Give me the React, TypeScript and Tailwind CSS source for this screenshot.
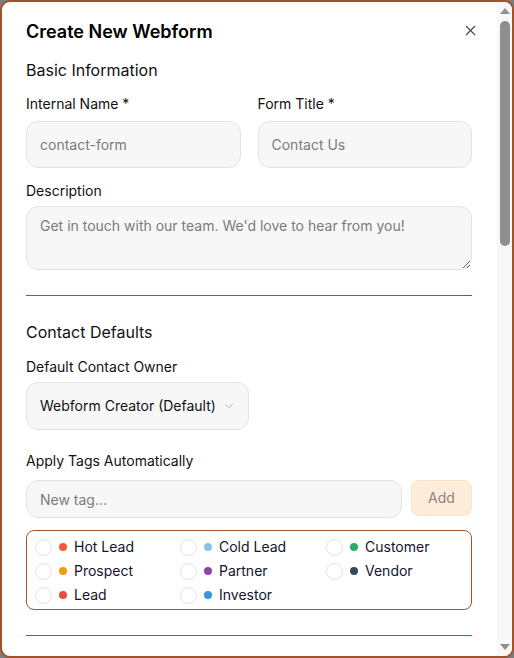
import { useState } from "react";
import { X, ChevronDown } from "lucide-react";

type Tag = { name: string; color: string };

const tags: Tag[] = [
  { name: "Hot Lead", color: "#ff5733" },
  { name: "Cold Lead", color: "#85c1e9" },
  { name: "Customer", color: "#27ae60" },
  { name: "Prospect", color: "#f39c12" },
  { name: "Partner", color: "#8e44ad" },
  { name: "Vendor", color: "#34495e" },
  { name: "Lead", color: "#e74c3c" },
  { name: "Investor", color: "#3498db" },
];

const inputCls =
  "w-full rounded-xl border border-[#e3e3e3] bg-[#f7f7f7] px-[13px] text-sm text-[#222] placeholder:text-[#7b7b7b] outline-none";

function Label({ children }: { children: React.ReactNode }) {
  return <label className="block text-sm leading-5 text-[#111]">{children}</label>;
}

function Section({ title }: { title: string }) {
  return <h3 className="text-base leading-6 text-[#111]">{title}</h3>;
}

// classic scrollbar column beside the dialog body
function ScrollTrack() {
  return (
    <div className="flex w-[15px] shrink-0 flex-col items-center bg-[#f8f8f8]">
      <svg width="10" height="6" viewBox="0 0 10 6" className="mt-[6px]">
        <path d="M5 0 L10 6 L0 6 Z" fill="#8f8f8f" />
      </svg>
      <div className="mt-[7px] h-[225px] w-[10px] rounded-full bg-[#8f8f8f]" />
      <div className="flex-1" />
      <svg width="10" height="6" viewBox="0 0 10 6" className="mb-[6px]">
        <path d="M0 0 L10 0 L5 6 Z" fill="#8f8f8f" />
      </svg>
    </div>
  );
}

export default function App() {
  const [selected, setSelected] = useState<string[]>([]);

  const toggle = (name: string) =>
    setSelected((s) => (s.includes(name) ? s.filter((n) => n !== name) : [...s, name]));

  return (
    <div className="h-[658px] w-[514px] bg-[#7d7d7d] font-['Inter',sans-serif]">
      <div className="flex h-full w-full overflow-hidden rounded-[10px] border-2 border-[#a0522d] bg-white">
        <div className="min-w-0 flex-1 overflow-hidden pl-6 pr-[25px] pt-4">
          <div className="flex items-center justify-between">
            <h2 className="text-lg font-semibold leading-7 text-black">Create New Webform</h2>
            <button type="button" className="-mr-[7px] mt-[-4px] text-[#444]">
              <X className="h-[17px] w-[17px]" strokeWidth={1.5} />
            </button>
          </div>

          {/* basic info */}
          <div className="mt-3">
            <Section title="Basic Information" />
            <div className="mt-3 grid grid-cols-2 gap-[17px]">
              <div>
                <Label>Internal Name *</Label>
                <input className={`${inputCls} mt-[7px] h-[47px]`} placeholder="contact-form" />
              </div>
              <div>
                <Label>Form Title *</Label>
                <input className={`${inputCls} mt-[7px] h-[47px]`} placeholder="Contact Us" />
              </div>
            </div>
            <div className="mt-[13px]">
              <Label>Description</Label>
              <textarea
                className={`${inputCls} mt-[5px] block h-[64px] py-[9px]`}
                placeholder="Get in touch with our team. We'd love to hear from you!"
              />
            </div>
          </div>

          <hr className="mt-[25px] border-t border-[#a0522d]" />

          {/* contact defaults */}
          <div className="mt-6">
            <Section title="Contact Defaults" />
            <div className="mt-[13px]">
              <Label>Default Contact Owner</Label>
              <button
                type="button"
                className="mt-[5px] flex h-[48px] w-[223px] items-center justify-between rounded-xl border border-[#e3e3e3] bg-[#f7f7f7] pl-[13px] pr-[12px] text-sm text-[#111]"
              >
                <span>Webform Creator (Default)</span>
                <ChevronDown className="h-[14px] w-[14px] text-[#a8a8a8]" strokeWidth={1.5} />
              </button>
            </div>

            <div className="mt-[21px]">
              <Label>Apply Tags Automatically</Label>
              <div className="mt-[9px] flex gap-[9px]">
                <input className={`${inputCls} h-[38px] flex-1`} placeholder="New tag..." />
                <button
                  type="button"
                  className="h-[36px] w-[61px] rounded-lg border border-[#fbe3c8] bg-[#fdecd9] text-sm text-[#8c8480]"
                >
                  Add
                </button>
              </div>

              <div className="mt-[12px] grid grid-cols-[145px_146px_145px] rounded-lg border border-[#a0522d] pb-[2px] pl-2 pt-1">
                {tags.map((t) => (
                  <button
                    key={t.name}
                    type="button"
                    onClick={() => toggle(t.name)}
                    className="flex h-6 items-center text-left text-sm text-[#14142b]"
                  >
                    <span
                      className={`h-[17px] w-[17px] shrink-0 rounded-full border ${
                        selected.includes(t.name) ? "border-[#a0522d] bg-[#a0522d]" : "border-[#e2e2e2] bg-white"
                      }`}
                    />
                    <span
                      className="ml-[7px] h-2 w-2 shrink-0 rounded-full"
                      style={{ backgroundColor: t.color }}
                    />
                    <span className="ml-[7px]">{t.name}</span>
                  </button>
                ))}
              </div>
            </div>
          </div>

          <hr className="mt-[25px] border-t border-[#a0522d]" />
        </div>
        <ScrollTrack />
      </div>
    </div>
  );
}
